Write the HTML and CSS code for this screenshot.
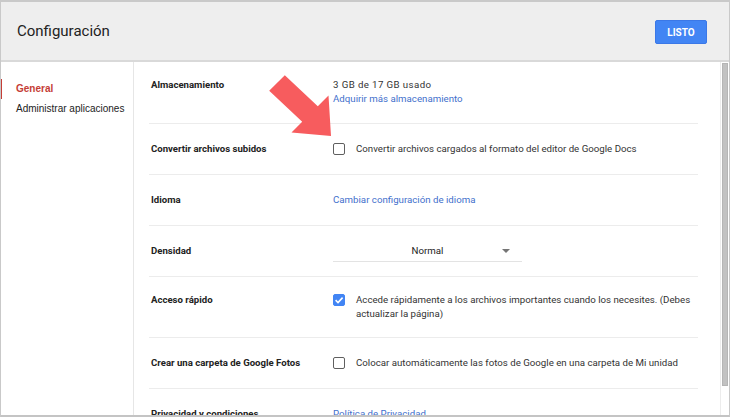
FILE: index.html
```html
<!DOCTYPE html>
<html lang="es">
<head>
    <meta charset="UTF-8">
    <meta name="viewport" content="width=device-width, initial-scale=1.0">
    <title>Configuración</title>
    <link rel="stylesheet" href="styles.css">
</head>
<body>
    <div class="ventana">
        <div class="cabecera">
            <h1 class="titulo">Configuración</h1>
            <button class="boton-listo">LISTO</button>
        </div>

        <div class="cuerpo">
            <div class="menu">
                <div class="menu-item activo">General</div>
                <div class="menu-item">Administrar aplicaciones</div>
            </div>

            <div class="contenido">
                <div class="fila fila-doble">
                    <div class="etiqueta">Almacenamiento</div>
                    <div class="valor">
                        <div class="uso">3 GB de 17 GB usado</div>
                        <a class="enlace" href="#">Adquirir más almacenamiento</a>
                    </div>
                </div>

                <div class="fila">
                    <div class="etiqueta">Convertir archivos subidos</div>
                    <div class="valor opcion">
                        <span class="casilla"></span>
                        <span>Convertir archivos cargados al formato del editor de Google Docs</span>
                    </div>
                </div>

                <div class="fila">
                    <div class="etiqueta">Idioma</div>
                    <div class="valor"><a class="enlace" href="#">Cambiar configuración de idioma</a></div>
                </div>

                <div class="fila">
                    <div class="etiqueta">Densidad</div>
                    <div class="valor">
                        <div class="selector">
                            <span>Normal</span>
                            <span class="flecha"></span>
                        </div>
                    </div>
                </div>

                <div class="fila fila-doble">
                    <div class="etiqueta">Acceso rápido</div>
                    <div class="valor opcion">
                        <span class="casilla marcada">
                            <svg width="12" height="12" viewBox="0 0 12 12"><path d="M2.6 6.2 L5 8.5 L9.6 3.6" fill="none" stroke="#fff" stroke-width="1.6"/></svg>
                        </span>
                        <span class="texto-largo">Accede rápidamente a los archivos importantes cuando los necesites. (Debes<br>actualizar la página)</span>
                    </div>
                </div>

                <div class="fila">
                    <div class="etiqueta">Crear una carpeta de Google Fotos</div>
                    <div class="valor opcion">
                        <span class="casilla"></span>
                        <span>Colocar automáticamente las fotos de Google en una carpeta de Mi unidad</span>
                    </div>
                </div>

                <div class="fila">
                    <div class="etiqueta">Privacidad y condiciones</div>
                    <div class="valor"><a class="enlace" href="#">Política de Privacidad</a></div>
                </div>
            </div>

            <div class="barra">
                <div class="barra-pulgar"></div>
            </div>
        </div>

        <svg class="flecha-roja" width="730" height="417" viewBox="0 0 730 417">
            <polygon points="284.8,75.2 317.8,106.2 328.5,95.5 331,136 291.5,132.5 302.2,121.8 269.2,90.8" fill="#f75c5e"/>
        </svg>
    </div>
</body>
</html>
```

FILE: styles.css
```css
body {
    margin: 0;
    font-family: Roboto, "Liberation Sans", sans-serif;
    color: #333;
}

.ventana {
    position: relative;
    width: 730px;
    height: 417px;
    box-sizing: border-box;
    border: 1px solid #c9c9c9;
    border-top: 2px solid #c9c9c9;
    border-bottom: 2px solid #c4c4c4;
    display: flex;
    flex-direction: column;
    overflow: hidden;
    background-color: #fff;
}

.cabecera {
    height: 58px;
    flex-shrink: 0;
    background-color: #eeeeee;
    border-bottom: 2px solid #d9d9d9;
    display: flex;
    align-items: center;
    justify-content: space-between;
    padding: 0 22px 0 16px;
}

.titulo {
    margin: 0;
    font-size: 15px;
    font-weight: normal;
    color: #222;
}

.boton-listo {
    width: 52px;
    height: 24px;
    background-color: #4285f4;
    border: 1px solid #3b78e7;
    border-radius: 2px;
    color: #fff;
    font-family: Roboto, sans-serif;
    font-size: 10px;
    font-weight: bold;
    padding: 0;
    margin-top: 2px;
}

.cuerpo {
    flex: 1;
    display: flex;
    min-height: 0;
}

.menu {
    width: 132px;
    flex-shrink: 0;
    border-right: 1px solid #e6e6e6;
    padding-top: 17px;
    font-family: "Liberation Sans", Arial, sans-serif;
    font-size: 10px;
}

.menu-item {
    line-height: 20px;
    padding-left: 14px;
    border-left: 2px solid transparent;
    margin-left: -1px;
    color: #222;
}

.menu-item.activo {
    border-left-color: #c53d36;
    color: #c53d36;
    font-weight: bold;
}

.contenido {
    flex: 1;
    padding: 0 22px 0 15px;
    overflow: hidden;
}

.fila {
    display: grid;
    grid-template-columns: 184px 1fr;
    padding: 18px 0;
    border-bottom: 1px solid #ececec;
    font-size: 9.7px;
    line-height: 14px;
}

.fila-doble {
    padding: 16px 0;
}

.fila-doble:first-child {
    padding-bottom: 17px;
}

.etiqueta {
    padding-left: 2px;
    font-size: 9.6px;
    font-weight: bold;
    color: #222;
}

.valor {
    color: #333;
}

.uso {
    letter-spacing: 0.4px;
}

.enlace {
    color: #3f6fcc;
    text-decoration: none;
}

.opcion {
    display: flex;
    align-items: flex-start;
    gap: 11px;
}

.texto-largo {
    white-space: nowrap;
}

.casilla {
    width: 12px;
    height: 12px;
    box-sizing: border-box;
    border: 1.5px solid #5f5f5f;
    border-radius: 2px;
    flex-shrink: 0;
    margin-top: 1px;
}

.casilla.marcada {
    background-color: #4285f4;
    border-color: #4285f4;
    display: flex;
    align-items: center;
    justify-content: center;
}

.casilla.marcada svg {
    flex-shrink: 0;
}

.selector {
    width: 189px;
    height: 14px;
    border-bottom: 1px solid #e3e3e3;
    padding-bottom: 3px;
    margin-bottom: -4px;
    position: relative;
    text-align: center;
    color: #222;
}

.flecha {
    position: absolute;
    right: 12px;
    top: 5px;
    width: 0;
    height: 0;
    border-left: 4px solid transparent;
    border-right: 4px solid transparent;
    border-top: 4px solid #757575;
}

.barra {
    width: 8px;
    flex-shrink: 0;
    border-left: 1px solid #ececec;
    padding-top: 1px;
}

.barra-pulgar {
    width: 6px;
    height: 323px;
    margin: 0 auto;
    background-color: #c2c2c2;
    border: 1px solid #b5b5b5;
    box-sizing: border-box;
}

.flecha-roja {
    position: absolute;
    left: -1px;
    top: -2px;
    pointer-events: none;
}
```
